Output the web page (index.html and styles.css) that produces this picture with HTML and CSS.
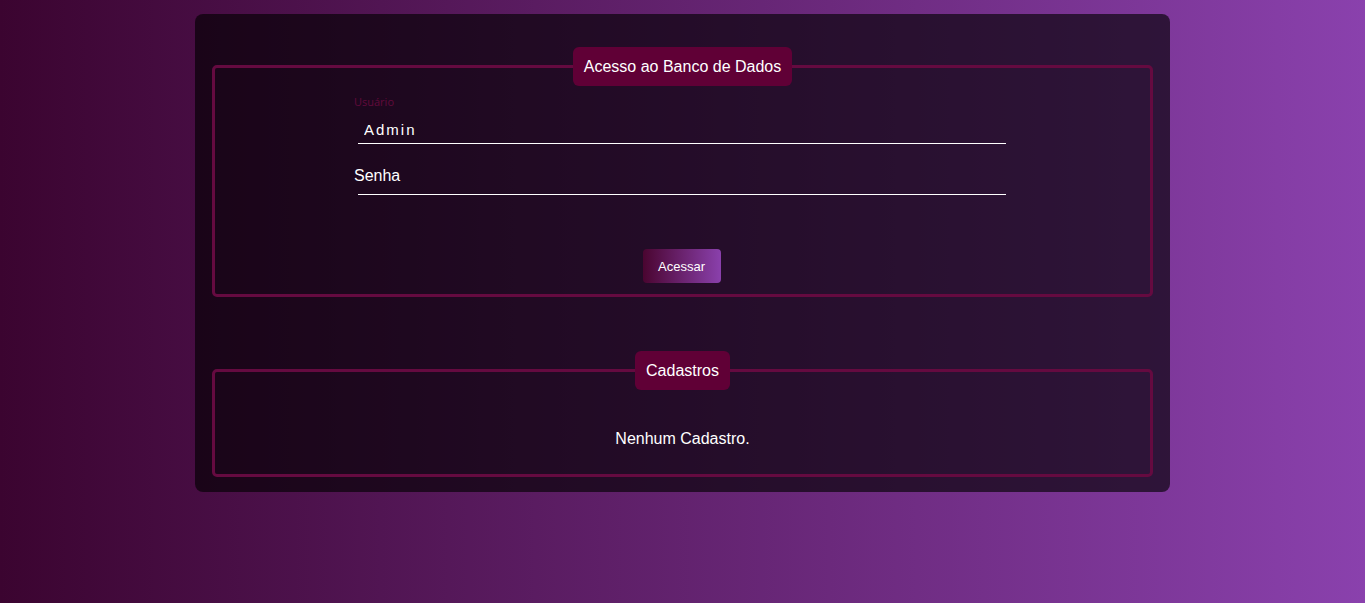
FILE: index.html
```html
<!DOCTYPE html>
<html lang="pt-BR">
<head>
<meta charset="utf-8">
<title>Acesso ao Banco de Dados</title>
<link rel="stylesheet" href="styles.css">
</head>
<body>
<main class="card">
  <fieldset class="box login">
    <legend class="box-title">Acesso ao Banco de Dados</legend>
    <div class="field filled">
      <input class="field-input admin" type="text" value="Admin" id="user">
      <label class="field-label" for="user">Usuário</label>
    </div>
    <div class="field">
      <input class="field-input" type="password" id="pass">
      <label class="field-label" for="pass">Senha</label>
    </div>
    <div class="actions">
      <button class="btn" type="button">Acessar</button>
    </div>
  </fieldset>

  <fieldset class="box records">
    <legend class="box-title">Cadastros</legend>
    <p class="empty">Nenhum Cadastro.</p>
  </fieldset>
</main>
</body>
</html>
```

FILE: styles.css
```css
html {
  min-height: 100%;
  background: linear-gradient(to right, #3b0430, #8a41ad);
}

body {
  margin: 0;
  padding: 14px 0 0;
  font-family: "Liberation Sans", Arial, sans-serif;
  color: #ffffff;
}

.card {
  width: 975px;
  box-sizing: border-box;
  margin: 0 auto;
  padding: 33px 17px 15px 17px;
  background: rgba(0, 0, 0, 0.63);
  border-radius: 8px;
  display: flex;
  flex-direction: column;
  gap: 54px;
}

.box {
  margin: 0;
  border: 3px solid #650a40;
  border-radius: 5px;
  min-width: 0;
}

.box-title {
  margin: 0 auto;
  padding: 10px 11px;
  line-height: 19px;
  font-size: 16px;
  background: #600036;
  border-radius: 6px;
  color: #ffffff;
}

.login {
  padding: 8px 0 11px;
  display: flex;
  flex-direction: column;
}

.field {
  position: relative;
  width: 652px;
  margin: 0 0 0 139px;
  padding-top: 22px;
}

.field-input {
  display: block;
  box-sizing: border-box;
  width: 648px;
  height: 28px;
  margin-left: 4px;
  padding: 0 6px;
  background: transparent;
  border: none;
  border-bottom: 1px solid #ffffff;
  outline: none;
  color: #ffffff;
  font-family: "Liberation Sans", Arial, sans-serif;
  font-size: 15px;
}

.field + .field .field-input {
  height: 29px;
}

.admin {
  letter-spacing: 2px;
}

.field-label {
  position: absolute;
  left: 0;
  top: 23px;
  font-size: 16px;
  line-height: 18px;
  color: #ffffff;
}

.filled .field-label {
  top: 1px;
  font-family: "Open Sans", "Noto Sans", sans-serif;
  font-size: 11px;
  line-height: 13px;
  color: #620a3c;
}

.actions {
  display: flex;
  justify-content: center;
  margin-top: 54px;
}

.btn {
  width: 78px;
  height: 34px;
  border: none;
  border-radius: 4px;
  background: linear-gradient(to right, #4a0530, #8a40ac);
  color: #ffffff;
  font-family: "Liberation Sans", Arial, sans-serif;
  font-size: 13px;
  margin-right: 2px;
}

.records {
  padding: 0;
}

.empty {
  margin: 0;
  padding: 40px 0 26px;
  text-align: center;
  font-size: 16px;
  line-height: 18px;
}
```
